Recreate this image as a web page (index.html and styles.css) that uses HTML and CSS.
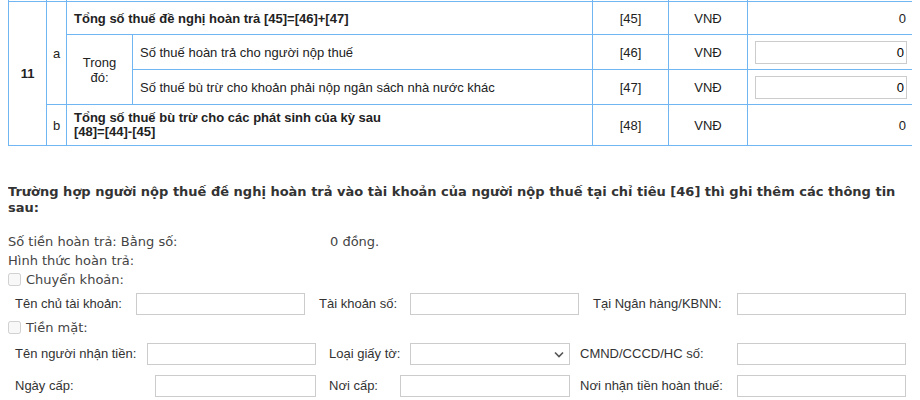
FILE: index.html
```html
<!DOCTYPE html>
<html lang="vi">
<head>
  <meta charset="UTF-8" />
  <meta name="viewport" content="width=device-width, initial-scale=1.0" />
  <title>Tờ khai - Hoàn trả</title>
  <link rel="stylesheet" href="styles.css">
</head>
<body>

  <!-- Bảng chỉ tiêu hoàn trả -->
  <table class="tax-table">
    <colgroup>
      <col class="c-stt"><col class="c-sub"><col class="c-group"><col class="c-desc">
      <col class="c-code"><col class="c-unit"><col class="c-val">
    </colgroup>
    <tr class="cut">
      <td></td><td></td><td colspan="2"></td><td></td><td></td><td></td>
    </tr>
    <tr class="r1">
      <td rowspan="4" class="center bold">11</td>
      <td rowspan="3" class="center">a</td>
      <td colspan="2" class="bold">Tổng số thuế đề nghị hoàn trả [45]=[46]+[47]</td>
      <td class="center">[45]</td>
      <td class="center">VNĐ</td>
      <td class="num">0</td>
    </tr>
    <tr class="r2">
      <td rowspan="2" class="center">Trong<br>đó:</td>
      <td>Số thuế hoàn trả cho người nộp thuế</td>
      <td class="center">[46]</td>
      <td class="center">VNĐ</td>
      <td class="num"><input class="num-input" type="text" value="0"></td>
    </tr>
    <tr class="r3">
      <td>Số thuế bù trừ cho khoản phải nộp ngân sách nhà nước khác</td>
      <td class="center">[47]</td>
      <td class="center">VNĐ</td>
      <td class="num"><input class="num-input" type="text" value="0"></td>
    </tr>
    <tr class="r4">
      <td class="center">b</td>
      <td colspan="2" class="bold tight">Tổng số thuế bù trừ cho các phát sinh của kỳ sau<br>[48]=[44]-[45]</td>
      <td class="center">[48]</td>
      <td class="center">VNĐ</td>
      <td class="num">0</td>
    </tr>
  </table>

  <!-- Thông tin tài khoản nhận hoàn -->
  <section class="refund">
    <p class="refund-title">Trường hợp người nộp thuế đề nghị hoàn trả vào tài khoản của người nộp thuế tại chỉ tiêu [46] thì ghi thêm các thông tin sau:</p>

    <div class="line amount">
      <span class="amount-label">Số tiền hoàn trả: Bằng số:</span>
      <span>0 đồng.</span>
    </div>
    <div class="line">Hình thức hoàn trả:</div>

    <label class="line check"><input type="checkbox" disabled> Chuyển khoản:</label>
    <div class="field-row row-bank">
      <span class="lbl first">Tên chủ tài khoản:</span><span><input class="txt" type="text"></span>
      <span class="lbl">Tài khoản số:</span><span><input class="txt" type="text"></span>
      <span class="lbl">Tại Ngân hàng/KBNN:</span><span><input class="txt" type="text"></span>
    </div>

    <label class="line check"><input type="checkbox" disabled> Tiền mặt:</label>
    <div class="field-row row-cash">
      <span class="lbl first">Tên người nhận tiền:</span><span><input class="txt" type="text"></span>
      <span class="lbl">Loại giấy tờ:</span>
      <span class="select-wrap">
        <select class="sel"><option></option></select>
        <svg class="chev" width="10" height="7" viewBox="0 0 10 7"><path d="M1 1.5l4 4 4-4" fill="none" stroke="#555" stroke-width="1.6"/></svg>
      </span>
      <span class="lbl">CMND/CCCD/HC số:</span><span><input class="txt" type="text"></span>
    </div>
    <div class="field-row row-issue">
      <span class="lbl first">Ngày cấp:</span><span><input class="txt" type="text"></span>
      <span class="lbl">Nơi cấp:</span><span><input class="txt wide" type="text"></span>
      <span class="lbl">Nơi nhận tiền hoàn thuế:</span><span><input class="txt" type="text"></span>
    </div>
  </section>

</body>
</html>
```

FILE: styles.css
```css
/* Base */
body {
  margin: 0 8px;
  font-family: "Liberation Sans", Arial, sans-serif;
  font-size: 13px;
  color: #333;
  background: #fff;
}

/* Tax table */
.tax-table {
  width: 904px;
  border-collapse: collapse;
  table-layout: fixed;
}
.c-stt { width: 38px; }
.c-sub { width: 20px; }
.c-group { width: 66px; }
.c-desc { width: 460px; }
.c-code { width: 76px; }
.c-unit { width: 79px; }
.c-val { width: 165px; }

.tax-table td {
  border: 1px solid #6fb6f2;
  padding: 0 7px;
  color: #222;
  line-height: 15px;
}
.tax-table .cut td {
  height: 1px;
  padding: 0;
  border-top: none;
  line-height: 0;
}
.tax-table .r1 td { height: 32px; }
.tax-table .r2 td { height: 34px; }
.tax-table .r3 td { height: 34px; }
.tax-table .r4 td { height: 40px; }
.tax-table .center { text-align: center; padding: 0; }
.tax-table .bold { font-weight: bold; }
.tax-table .tight { line-height: 14px; }
.tax-table .num { text-align: right; padding-right: 6px; }

.num-input {
  width: 152px;
  height: 23px;
  box-sizing: border-box;
  border: 1px solid #ccc;
  padding: 0 2px;
  text-align: right;
  font: 13px "Liberation Sans", Arial, sans-serif;
  color: #000;
  margin: 0;
  vertical-align: middle;
}

/* Refund info */
.refund {
  color: #444;
  font-family: "DejaVu Sans", Verdana, sans-serif;
  font-size: 13px;
}
.refund-title {
  margin: 38px 0 16px;
  font-weight: bold;
  font-size: 13px;
  line-height: 16px;
  color: #333;
}
.line {
  display: flex;
  align-items: center;
  height: 19px;
}
.amount-label { width: 322px; }
.check input {
  width: 13px;
  height: 13px;
  margin: 0 5px 0 0;
}

.field-row {
  display: grid;
  align-items: center;
  font-family: "Liberation Sans", Arial, sans-serif;
  color: #333;
}
.field-row .first { padding-left: 7px; }
.row-bank {
  grid-template-columns: 128px 183px 91px 183px 144px 169px;
  height: 29px;
}
.row-cash {
  grid-template-columns: 139px 182px 81px 170px 157px 169px;
  height: 31px;
  margin-top: 1px;
}
.row-issue {
  grid-template-columns: 147px 174px 71px 180px 157px 169px;
  height: 33px;
}
.txt {
  display: block;
  width: 169px;
  height: 22px;
  box-sizing: border-box;
  border: 1px solid #ccc;
  margin: 0;
  padding: 0 3px;
}
.row-issue .txt { width: 161px; }
.row-issue .txt.wide { width: 170px; }
.row-issue span:last-child .txt { width: 169px; }

/* Dropdown with drawn chevron */
.select-wrap {
  position: relative;
  display: block;
  width: 160px;
  height: 22px;
}
.sel {
  appearance: none;
  width: 160px;
  height: 22px;
  border: 1px solid #ccc;
  background: #fff;
  margin: 0;
  display: block;
}
.chev {
  position: absolute;
  right: 6px;
  top: 8px;
  pointer-events: none;
}
```
